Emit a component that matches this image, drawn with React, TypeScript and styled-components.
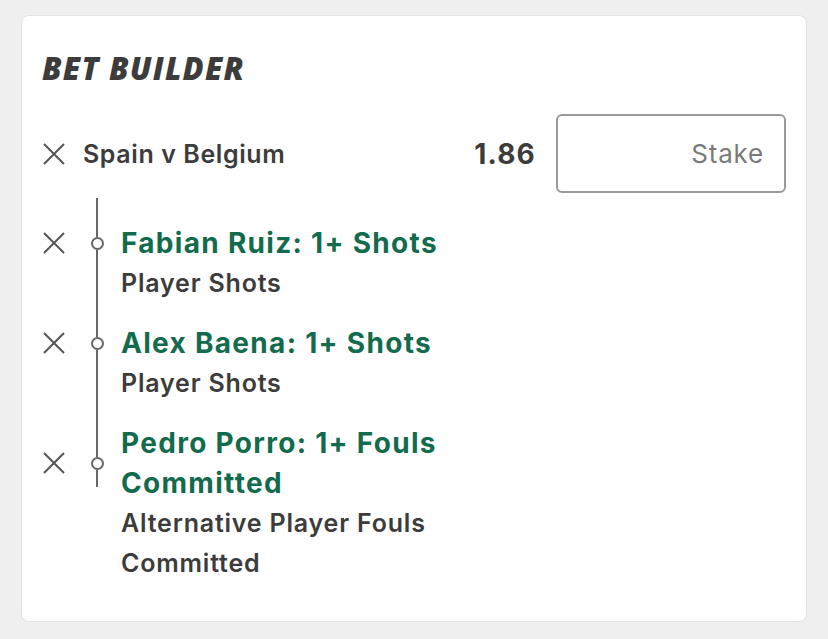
import React from 'react';
import styled, { createGlobalStyle } from 'styled-components';

const GlobalStyle = createGlobalStyle`
  body {
    margin: 0;
    background: #efefef;
    font-family: Inter, "Liberation Sans", sans-serif;
    color: #3c3c3c;
  }
`;

const Page = styled.div`
  padding: 15px 21px 17px 21px;
`;

const Card = styled.div`
  background: #fff;
  border: 1px solid #e3e3e3;
  border-radius: 8px;
  padding: 34px 20px 18px 20px;
`;

const Title = styled.h2`
  margin: 0 0 28px 0;
  font-family: "Open Sans", sans-serif;
  font-weight: 800;
  font-style: italic;
  font-size: 31px;
  line-height: 36px;
  letter-spacing: 1.2px;
  color: #3c3c3c;
`;

const Header = styled.div`
  display: flex;
  align-items: center;
  height: 79px;
  margin-bottom: 5px;
`;

const Event = styled.div`
  flex: 1;
  display: flex;
  align-items: center;
  gap: 17px;
  font-size: 25px;
  font-weight: 600;
  letter-spacing: 0.6px;
`;

const Odds = styled.div`
  font-size: 28px;
  font-weight: 700;
  letter-spacing: 1.2px;
  margin-right: 20px;
`;

const Stake = styled.div`
  width: 230px;
  height: 79px;
  box-sizing: border-box;
  border: 2px solid #9a9a9a;
  border-radius: 6px;
  display: flex;
  align-items: center;
  justify-content: flex-end;
  padding-right: 20px;
  font-size: 26px;
  letter-spacing: 0.8px;
  color: #7a7a7a;
`;

const Leg = styled.div`
  display: grid;
  grid-template-columns: 44px 22px 358px;
`;

const RemoveCell = styled.div`
  display: flex;
  align-items: center;
`;

const Track = styled.div`
  display: flex;
  flex-direction: column;
  align-items: center;
`;

const StemPart = styled.div`
  flex: 1;
  display: flex;
  flex-direction: column;
  align-items: center;
`;

const Stem = styled.div<{ $size?: number }>`
  width: 2px;
  background: #666;
  ${(p) => (p.$size !== undefined ? `height: ${p.$size}px;` : 'flex: 1;')}
`;

const Dot = styled.div`
  width: 9px;
  height: 9px;
  border: 2px solid #666;
  border-radius: 50%;
  background: #fff;
  flex: none;
`;

const Market = styled.div`
  padding-left: 13px;
  color: #136b4e;
  font-size: 28px;
  font-weight: 700;
  letter-spacing: 1.3px;
  line-height: 40px;
`;

const Sub = styled.div`
  padding: 0 0 20px 13px;
  font-size: 25px;
  font-weight: 600;
  letter-spacing: 0.8px;
  line-height: 40px;
`;

const Cross = () => (
  <svg width="24" height="24" viewBox="0 0 24 24">
    <path d="M2 2 L22 22 M22 2 L2 22" stroke="#555" strokeWidth="2" fill="none" />
  </svg>
);

const legs = [
  { market: 'Fabian Ruiz: 1+ Shots', sub: 'Player Shots' },
  { market: 'Alex Baena: 1+ Shots', sub: 'Player Shots' },
  { market: 'Pedro Porro: 1+ Fouls Committed', sub: 'Alternative Player Fouls Committed' },
];

const App = () => {
  return (
    <Page>
      <GlobalStyle />
      <Card>
        <Title>BET BUILDER</Title>
        <Header>
          <Event>
            <Cross />
            Spain v Belgium
          </Event>
          <Odds>1.86</Odds>
          <Stake>Stake</Stake>
        </Header>
        <Leg>
          <span />
          <Track>
            <Stem $size={25} />
          </Track>
          <span />
        </Leg>
        {legs.map((leg, i) => {
          const last = i === legs.length - 1;
          return (
            <Leg key={leg.market}>
              <RemoveCell>
                <Cross />
              </RemoveCell>
              <Track>
                <StemPart>
                  <Stem />
                </StemPart>
                <Dot />
                <StemPart>
                  <Stem $size={last ? 17 : undefined} />
                </StemPart>
              </Track>
              <Market>{leg.market}</Market>
              <span />
              <Track>{!last && <Stem />}</Track>
              <Sub>{leg.sub}</Sub>
            </Leg>
          );
        })}
      </Card>
    </Page>
  );
};

export default App;
